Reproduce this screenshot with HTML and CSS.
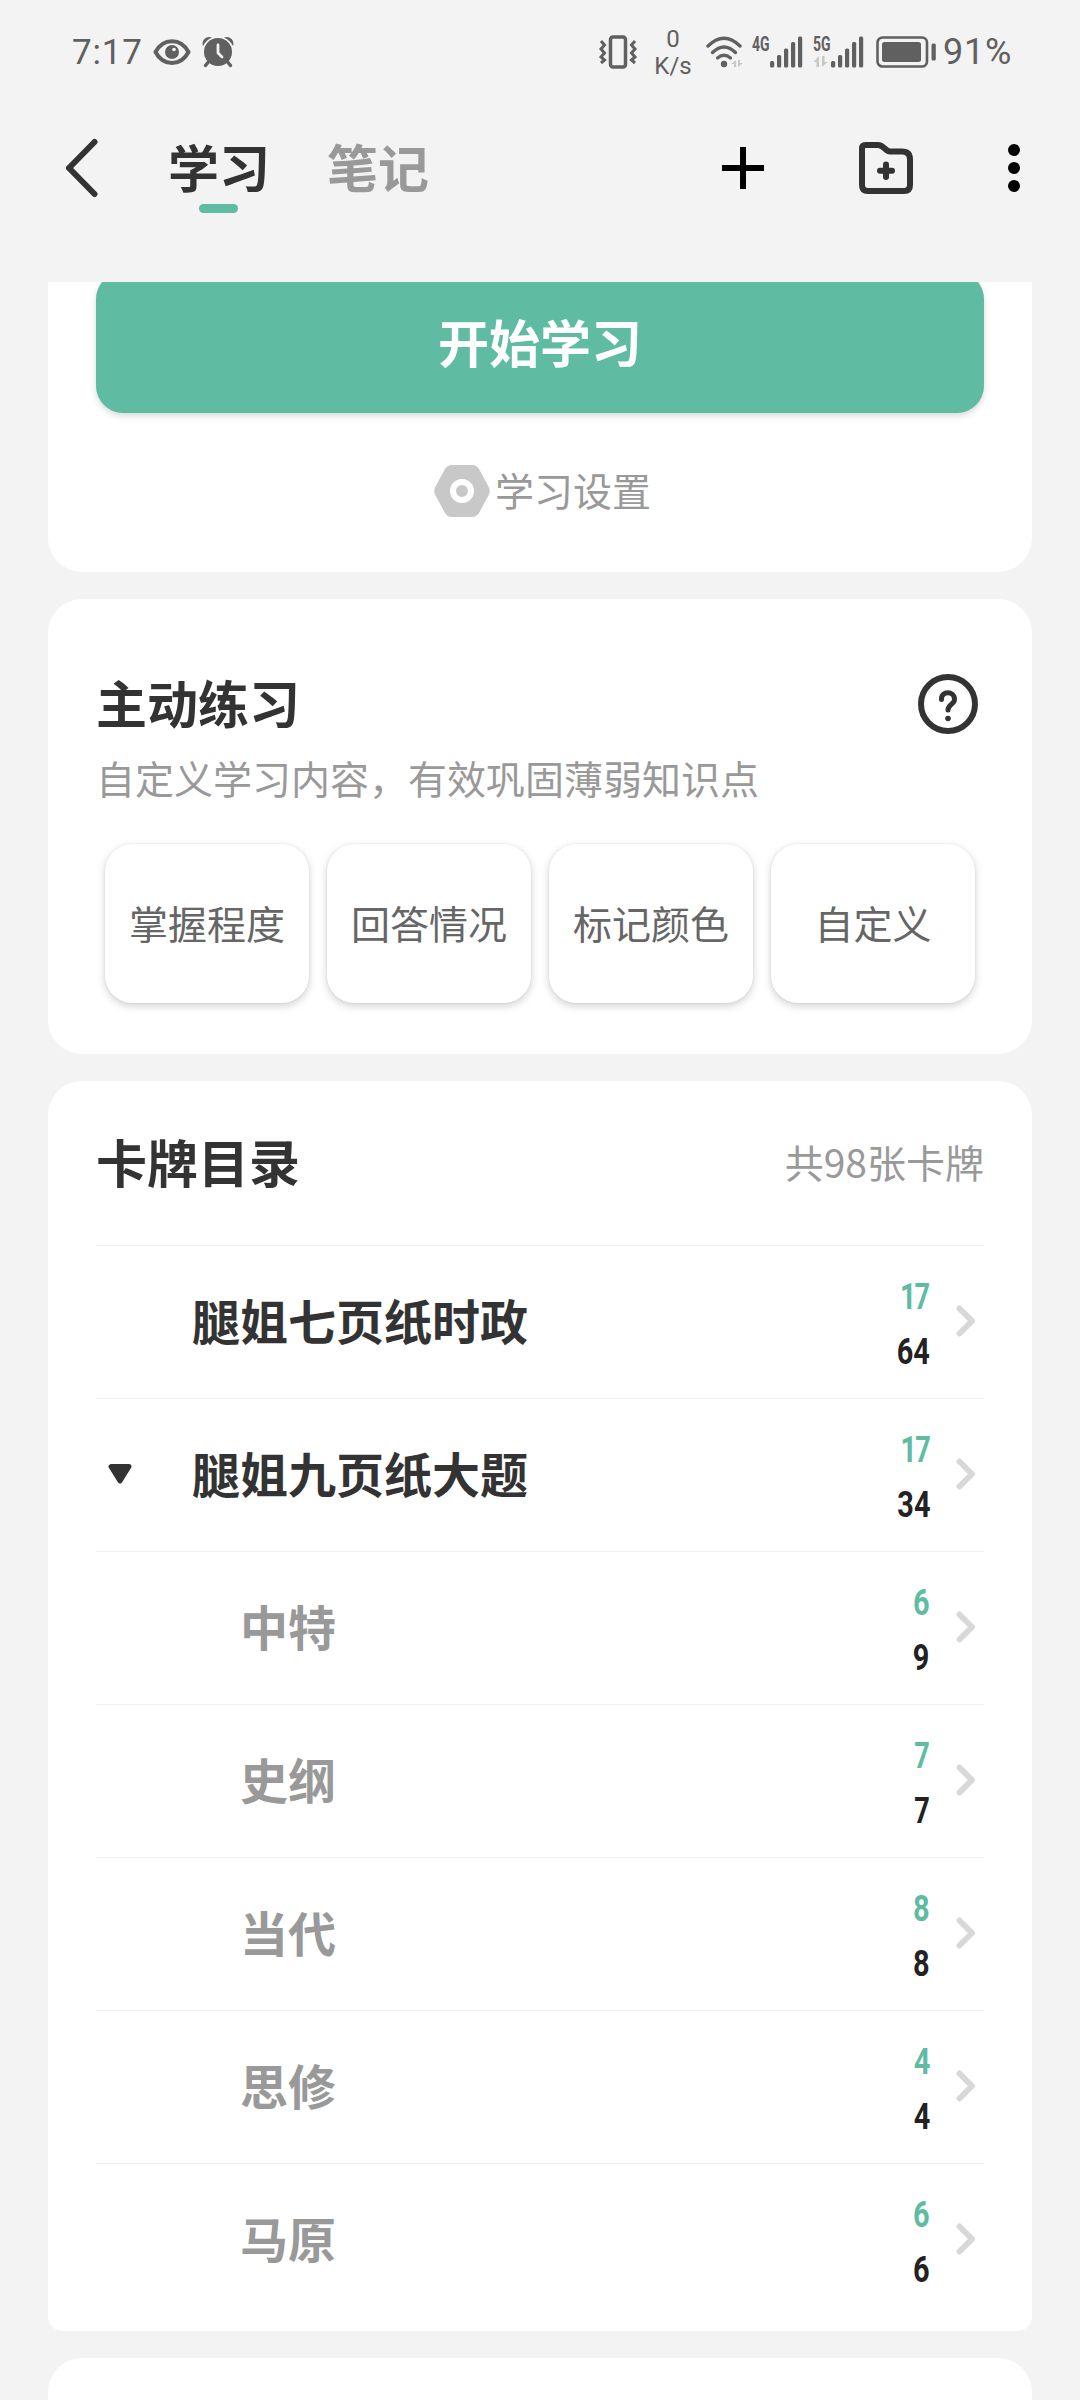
FILE: index.html
```html
<!DOCTYPE html>
<html lang="zh-CN">
<head>
    <meta charset="UTF-8">
    <meta name="viewport" content="width=device-width, initial-scale=1.0">
    <title>学习</title>
    <link rel="stylesheet" href="styles.css">
</head>
<body>
    <div class="status-bar">
        <span class="time">7:17</span>
        <svg class="eye" width="38" height="26" viewBox="0 0 38 26">
            <path d="M2.500 13C10-1.500 28-1.500 35.500 13C28 27.500 10 27.500 2.500 13Z" fill="none" stroke="#606060" stroke-width="4" stroke-linejoin="round"/>
            <circle cx="19" cy="13" r="7" fill="#606060"/>
            <circle cx="21" cy="10.500" r="1.800" fill="#f3f3f3"/>
        </svg>
        <svg class="alarm" width="32" height="32" viewBox="0 0 32 32">
            <path d="M1 10C-1 5 4-1 10 1.500C6 3.500 3 6 1 10ZM31 10C33 5 28-1 22 1.500C26 3.500 29 6 31 10Z" fill="#606060"/>
            <circle cx="16" cy="16.500" r="15.500" fill="#f3f3f3"/>
            <path d="M8 24L3.500 29.500M24 24L28.500 29.500" stroke="#606060" stroke-width="3.500" stroke-linecap="round"/>
            <circle cx="16" cy="16" r="14" fill="#606060"/>
            <path d="M16 9V17L20 21" fill="none" stroke="#f3f3f3" stroke-width="2.800" stroke-linecap="round"/>
        </svg>

        <div class="status-right">
            <svg class="vibrate" width="38" height="34" viewBox="0 0 38 34" fill="none" stroke="#606060">
                <rect x="11.500" y="2" width="15" height="30" rx="2.500" stroke-width="3.500"/>
                <path d="M2 6L5.500 10L2 14L5.500 18L2 22L5.500 25L2 28M36 6L32.500 10L36 14L32.500 18L36 22L32.500 25L36 28" stroke-width="3"/>
            </svg>
            <div class="speed"><span>0</span><span>K/s</span></div>
            <svg class="wifi" width="38" height="32" viewBox="0 0 38 32">
                <g fill="none" stroke="#606060" stroke-width="3.300" stroke-linecap="round">
                    <path d="M2 10Q18 -5.500 34 10"/>
                    <path d="M6.500 16.500Q18 5.500 29.500 16.500"/>
                    <path d="M11.500 22Q18 16.500 24.500 22"/>
                </g>
                <circle cx="18" cy="28" r="3.200" fill="#606060"/>
                <path d="M30 24V31H28V28H25ZM32 31V24H34V27H37Z" fill="#c8c8c8"/>
            </svg>
            <div class="signal">
                <div class="net">
                    <span>4G</span>
                </div>
                <svg width="33" height="32" viewBox="17.500 0 33 32" fill="#606060">
                    <rect x="17.500" y="25" width="4.200" height="6.500" rx="1.500"/>
                    <rect x="24.500" y="19" width="4.200" height="12.500" rx="1.500"/>
                    <rect x="31.500" y="12.500" width="4.200" height="19" rx="1.500"/>
                    <rect x="38.500" y="6" width="4.200" height="25.500" rx="1.500"/>
                    <rect x="45.500" y="0.500" width="4.200" height="31" rx="1.500"/>
                </svg>
            </div>
            <div class="signal">
                <div class="net">
                    <span>5G</span>
                    <svg width="15" height="12" viewBox="0 0 15 12"><path d="M6 0V11H3.500V6H0.500ZM9 11V0H11.500V6H14.500Z" fill="#c8c8c8"/></svg>
                </div>
                <svg width="33" height="32" viewBox="17.500 0 33 32" fill="#606060">
                    <rect x="17.500" y="25" width="4.200" height="6.500" rx="1.500"/>
                    <rect x="24.500" y="19" width="4.200" height="12.500" rx="1.500"/>
                    <rect x="31.500" y="12.500" width="4.200" height="19" rx="1.500"/>
                    <rect x="38.500" y="6" width="4.200" height="25.500" rx="1.500"/>
                    <rect x="45.500" y="0.500" width="4.200" height="31" rx="1.500"/>
                </svg>
            </div>
            <svg class="battery" width="60" height="32" viewBox="0 0 60 32">
                <rect x="1.500" y="1.500" width="49.500" height="29" rx="5" fill="none" stroke="#606060" stroke-width="2.600"/>
                <rect x="6" y="6" width="39" height="20" rx="2.500" fill="#606060"/>
                <rect x="55.500" y="7.500" width="4.300" height="17" rx="1.500" fill="#606060"/>
            </svg>
            <span class="percent">91%</span>
        </div>
    </div>

    <div class="header">
        <svg class="back" width="34" height="60" viewBox="0 0 34 60">
            <path d="M29.500 4L4 30L29.500 56" fill="none" stroke="#333" stroke-width="6" stroke-linecap="round" stroke-linejoin="round"/>
        </svg>
        <div class="tab active">学习</div>
        <div class="tab">笔记</div>
        <div class="actions">
            <svg width="42" height="42" viewBox="0 0 42 42">
                <path d="M21 0V42M0 21H42" stroke="#000" stroke-width="6"/>
            </svg>
            <svg width="54" height="52" viewBox="0 0 54 52" fill="none" stroke="#333" stroke-width="6">
                <path d="M6.500 3H19C25 3 26 9.500 31 9.500H43Q51 9.500 51 17.500V43Q51 49 45 49H9Q3 49 3 43V6.500Q3 3 6.500 3Z"/>
                <path d="M27 22.500V35M21 28.700H33" stroke-linecap="round"/>
            </svg>
            <svg width="12" height="48" viewBox="0 0 12 48">
                <circle cx="6" cy="6" r="6"/>
                <circle cx="6" cy="24" r="6"/>
                <circle cx="6" cy="42" r="6"/>
            </svg>
        </div>
    </div>

    <div class="content">
        <div class="card start-card">
            <div class="start-button">开始学习</div>
            <div class="settings">
                <svg width="56" height="52" viewBox="0 0 56 52">
                    <path d="M18 0H38Q42.500 0 45 4L54.500 21.500Q57 26 54.500 30.500L45 48Q42.500 52 38 52H18Q13.500 52 11 48L1.500 30.500Q-1 26 1.500 21.500L11 4Q13.500 0 18 0Z" fill="#c8c8c8"/>
                    <circle cx="28" cy="26" r="9" fill="none" stroke="#fff" stroke-width="6"/>
                </svg>
                <span>学习设置</span>
            </div>
        </div>

        <div class="card practice-card">
            <div class="card-head">
                <h2>主动练习</h2>
                <svg class="help" width="60" height="60" viewBox="0 0 60 60" fill="none" stroke="#333">
                    <circle cx="30" cy="30" r="27" stroke-width="6"/>
                    <path d="M23.500 25.500C23 16.500 36.500 16.500 36.500 25.500C36.500 30.500 30 30 30 36" stroke-width="5" stroke-linecap="round"/>
                    <circle cx="30" cy="44.500" r="2.800" fill="#333" stroke="none"/>
                </svg>
            </div>
            <p class="desc">自定义学习内容，有效巩固薄弱知识点</p>
            <div class="options">
                <div class="option">掌握程度</div>
                <div class="option">回答情况</div>
                <div class="option">标记颜色</div>
                <div class="option">自定义</div>
            </div>
        </div>

        <div class="card list-card">
            <div class="card-head list-head">
                <h2>卡牌目录</h2>
                <span class="total">共98张卡牌</span>
            </div>
            <div id="list"></div>
        </div>

        <div class="card next-card"></div>
    </div>

    <script>
        const list = document.getElementById('list');

        const decks = [
            { name: '腿姐七页纸时政', done: 17, total: 64 },
            { name: '腿姐九页纸大题', done: 17, total: 34, open: true },
            { name: '中特', done: 6, total: 9, sub: true },
            { name: '史纲', done: 7, total: 7, sub: true },
            { name: '当代', done: 8, total: 8, sub: true },
            { name: '思修', done: 4, total: 4, sub: true },
            { name: '马原', done: 6, total: 6, sub: true }
        ];

        const triangle = '<svg width="24" height="20" viewBox="0 0 24 20"><path d="M3 2.500H21L12 17Z" fill="#333" stroke="#333" stroke-width="5" stroke-linejoin="round"/></svg>';
        const chevron = '<svg class="chevron" width="20" height="32" viewBox="0 0 20 32"><path d="M3.500 3.500L16 16L3.500 28.500" fill="none" stroke="#d8d8d8" stroke-width="6" stroke-linecap="round" stroke-linejoin="round"/></svg>';

        decks.forEach(deck => {
            const row = document.createElement('div');
            row.className = deck.sub ? 'row sub' : 'row';
            row.innerHTML = `
                <div class="toggle">${deck.open ? triangle : ''}</div>
                <div class="name">${deck.name}</div>
                <div class="counts"><span class="done">${deck.done}</span><span>${deck.total}</span></div>
                ${chevron}`;
            list.appendChild(row);
        });
    </script>
</body>
</html>
```

FILE: styles.css
```css
* {
    box-sizing: border-box;
}

body {
    width: 1080px;
    height: 2400px;
    margin: 0;
    overflow: hidden;
    display: flex;
    flex-direction: column;
    background-color: #f3f3f3;
    color: #333;
    font-family: "Noto Sans CJK SC", sans-serif;
}

svg {
    display: block;
    flex-shrink: 0;
}

/* status bar */
.status-bar {
    height: 104px;
    padding: 0 68px 0 72px;
    display: flex;
    align-items: center;
    color: #606060;
    font-family: Roboto, sans-serif;
}

.time {
    width: 81px;
    font-size: 35px;
    letter-spacing: 0.8px;
}

.alarm {
    margin-left: 11px;
}

.status-right {
    margin-left: auto;
    display: flex;
    align-items: center;
}

.speed {
    width: 36px;
    margin: 0 15px 0 18px;
    padding-top: 1px;
    display: flex;
    flex-direction: column;
    align-items: center;
    font-size: 24px;
    line-height: 27px;
}

.signal {
    margin-left: 8px;
    display: flex;
}

.signal + .signal {
    margin-left: 10px;
}

.net {
    width: 18px;
    height: 32px;
    display: flex;
    flex-direction: column;
    justify-content: space-between;
}

.net span {
    width: 26px;
    font-size: 20px;
    font-weight: bold;
    line-height: 16px;
    transform: scaleX(0.7);
    transform-origin: left;
}

.battery {
    margin: 0 7px 0 12px;
}

.percent {
    width: 69px;
    font-size: 36px;
    letter-spacing: 0.8px;
}

/* header */
.header {
    height: 178px;
    padding: 0 60px 50px 65px;
    display: flex;
    align-items: center;
}

.tab {
    position: relative;
    margin: 0 0 4px 57px;
    font-size: 51px;
    font-weight: bold;
    line-height: 74px;
    color: #999;
}

.tab.active {
    margin-left: 69px;
    color: #333;
}

.tab.active::after {
    content: "";
    position: absolute;
    left: 31px;
    bottom: -10px;
    width: 39px;
    height: 9px;
    border-radius: 5px;
    background-color: #5fbba2;
}

.actions {
    margin-left: auto;
    display: flex;
    align-items: center;
    gap: 95px;
}

/* cards */
.content {
    flex: 1;
    padding: 0 48px;
    overflow: hidden;
    display: flex;
    flex-direction: column;
    gap: 27px;
}

.card {
    flex-shrink: 0;
    padding: 0 48px;
    border-radius: 34px;
    background-color: #fff;
}

.start-card {
    height: 290px;
    border-radius: 0 0 34px 34px;
    overflow: hidden;
}

.start-button {
    height: 141px;
    margin-top: -10px;
    padding-bottom: 4px;
    display: flex;
    align-items: center;
    justify-content: center;
    border-radius: 27px;
    background-color: #5fbba2;
    box-shadow: 0 3px 6px rgba(0, 0, 0, 0.15);
    color: #fff;
    font-size: 51px;
    font-weight: bold;
}

.settings {
    margin-top: 47px;
    padding-left: 5px;
    display: flex;
    align-items: center;
    justify-content: center;
    gap: 5px;
    color: #999;
    font-size: 39px;
    line-height: 58px;
}

.settings span {
    padding-bottom: 4px;
}

h2 {
    margin: 0;
    padding-bottom: 4px;
    font-size: 51px;
    line-height: 70px;
}

.card-head {
    display: flex;
    align-items: center;
    justify-content: space-between;
}

.practice-card {
    height: 455px;
    padding-top: 68px;
}

.help {
    margin-right: 6px;
}

.desc {
    margin: 7px 0 0;
    color: #999;
    font-size: 39px;
    line-height: 58px;
}

.options {
    margin: 38px 9px 0;
    display: grid;
    grid-template-columns: repeat(4, 1fr);
    gap: 18px;
}

.option {
    height: 159px;
    padding-bottom: 3px;
    display: flex;
    align-items: center;
    justify-content: center;
    border-radius: 27px;
    background-color: #fff;
    box-shadow: 0 3px 8px rgba(0, 0, 0, 0.18), 0 0 2px rgba(0, 0, 0, 0.1);
    color: #666;
    font-size: 39px;
}

/* deck list */
.list-card {
    padding-bottom: 15px;
    border-radius: 34px 34px 15px 15px;
}

.list-head {
    height: 164px;
}

.total {
    padding-bottom: 4px;
    color: #999;
    font-size: 39px;
}

.row {
    height: 153px;
    padding-bottom: 2px;
    border-top: 1px solid #f0f0f0;
    display: flex;
    align-items: center;
}

.toggle {
    width: 96px;
    padding-left: 12px;
}

.name {
    flex: 1;
    padding-bottom: 5px;
    font-size: 48px;
    font-weight: bold;
}

.sub .name {
    padding-left: 48px;
    color: #999;
}

.counts {
    display: flex;
    flex-direction: column;
    align-items: flex-end;
    margin-right: 26px;
    padding-top: 6px;
    color: #222;
    font-family: Roboto, sans-serif;
    font-size: 37px;
    font-weight: bold;
    font-variant-numeric: proportional-nums;
    line-height: 55px;
    transform: scaleX(0.78);
    transform-origin: right;
}

.done {
    color: #5fbba2;
}

.chevron {
    margin-right: 8px;
}

.next-card {
    height: 200px;
}
```
